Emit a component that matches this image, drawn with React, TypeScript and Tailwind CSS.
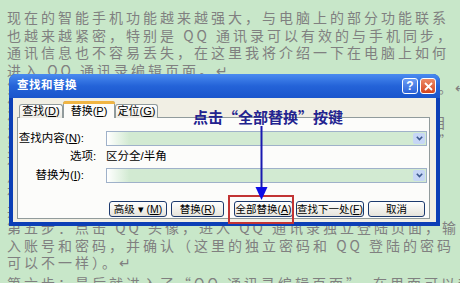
import React from 'react';

const cjk = "font-['Noto_Sans_CJK_SC','Liberation_Sans',sans-serif]";
const ui = "font-['Liberation_Sans','Noto_Sans_CJK_SC',sans-serif]";

// document text behind the dialog; most middle lines are hidden by the window
const docLines: { text: string; cls?: string }[] = [
  { text: '现在的智能手机功能越来越强大，与电脑上的部分功能联系' },
  { text: '也越来越紧密，特别是 QQ 通讯录可以有效的与手机同步，' },
  { text: '通讯信息也不容易丢失，在这里我将介绍一下在电脑上如何' },
  { text: '进入 QQ 通讯录编辑页面。↵' },
  { text: '第一步：在电脑上打开软件并登陆自己的帐号，找到面板 。↵' },
  { text: '第二步：在主面板的下方找到应用管理器的图标并打开。' },
  { text: '第三步：在打开的窗口中找到通讯录一项，然后点击进入目' },
  { text: '第四步：如果没有找到，可以点击添加应用进行搜索“通 ”' },
  { text: '这样就可以在应用列表中看到通讯录的图标了。↵' },
  { text: '点击图标以后，会弹出一个新的页面。↵' },
  { text: '在这里我们可以看到所有的联系人信息。↵' },
  { text: '并且可以进行编辑和修改。↵' },
  { text: '第五步：点击 QQ 头像，进入 QQ 通讯录独立登陆页面，输' },
  { text: '入账号和密码，并确认（这里的独立密码和 QQ 登陆的密码' },
  { text: '可以不一样）。↵', cls: 'mb-[3px]' },
  { text: '第六步：最后就进入了“QQ 通讯录编辑页面”，在里面可以新' },
];

function Key({ k }: { k: string }) {
  return (
    <>
      (<span className="underline underline-offset-1">{k}</span>)
    </>
  );
}

function XpButton({ w, children }: { w: string; children: React.ReactNode }) {
  return (
    <div
      className={`${w} flex h-[16px] items-center justify-center whitespace-nowrap rounded-[3px] border border-[#1d3a6e] bg-linear-to-b from-white to-[#e6e4dc] text-[10.5px] leading-none text-black`}
    >
      {children}
    </div>
  );
}

function Combo() {
  return (
    <div className="flex h-[15px] flex-1 items-stretch border border-[#9fb1c9] bg-linear-to-r from-white from-0% to-[#d2ead2] to-[7%]">
      <div className="flex-1" />
      <div className="m-[1px] flex w-[12px] items-center justify-center rounded-[2px] bg-[#c6d6f6]">
        <svg width="7" height="5" viewBox="0 0 7 5">
          <path d="M0.8 0.8 L3.5 3.6 L6.2 0.8" fill="none" stroke="#3d5a8e" strokeWidth="1.6" />
        </svg>
      </div>
    </div>
  );
}

function Dialog() {
  return (
    <div className={`absolute left-[9px] top-[74px] flex h-[152px] w-[431px] flex-col rounded-t-[7px] bg-[#0c3fb6] ${ui}`}>
      {/* Title bar */}
      <div className="flex h-[24px] items-center justify-between rounded-t-[7px] bg-linear-to-b from-[#4a8bf0] via-[#2463d8] to-[#1a55cc] pl-[8px] pr-[4px]">
        <span className="whitespace-nowrap text-[11.5px] font-bold tracking-[0.5px] text-white">查找和替换</span>
        <div className="flex gap-[2px]">
          <div className="flex h-[16px] w-[16px] items-center justify-center rounded-[3px] border border-white bg-linear-to-b from-[#6c9cf4] to-[#2e63d8] text-[12px] font-bold leading-none text-white">
            ?
          </div>
          <div className="flex h-[16px] w-[16px] items-center justify-center rounded-[3px] border border-white bg-linear-to-b from-[#ec8a66] to-[#d4431c]">
            <svg width="9" height="9" viewBox="0 0 9 9">
              <path d="M1 1 L8 8 M8 1 L1 8" stroke="white" strokeWidth="1.8" />
            </svg>
          </div>
        </div>
      </div>

      {/* Body */}
      <div className="mx-[4px] mb-[4px] flex flex-1 flex-col bg-[#f1efe4] pl-[4px] pr-[6px] pt-[3px] pb-[3px] text-[11.5px] text-black">
        {/* Tabs */}
        <div className="relative z-10 -mb-[1px] flex h-[17px] items-end whitespace-nowrap pl-[2px] text-[11px] leading-none">
          <div className="flex h-[14px] w-[44px] items-center justify-center rounded-t-[3px] border border-b-0 border-[#919b9c] bg-linear-to-b from-white to-[#ecebe4]">
            查找<Key k="D" />
          </div>
          <div className="flex h-[17px] w-[52px] flex-col rounded-t-[3px] border border-b-0 border-[#919b9c] bg-[#fcfcfa]">
            <div className="-mx-[1px] -mt-[1px] h-[3px] rounded-t-[3px] bg-[#f0b543]" />
            <div className="flex flex-1 items-center justify-center">
              替换<Key k="P" />
            </div>
          </div>
          <div className="flex h-[14px] w-[43px] items-center justify-center rounded-t-[3px] border border-b-0 border-[#919b9c] bg-linear-to-b from-white to-[#ecebe4]">
            定位<Key k="G" />
          </div>
        </div>

        {/* Tab panel */}
        <div className="flex flex-1 flex-col whitespace-nowrap border border-[#919b9c] bg-[#fcfcfa]">
          <div className="mt-[12px] flex items-center pr-[2px]">
            <div className="flex w-[66px] justify-end">
              查找内容<Key k="N" />:
            </div>
            <div className="w-[22px]" />
            <Combo />
          </div>
          <div className="flex h-[19px] items-center">
            <div className="w-[52px]" />
            <div className="w-[36px]">选项:</div>
            <div>区分全/半角</div>
          </div>
          <div className="mt-[1px] flex items-center pr-[2px]">
            <div className="flex w-[66px] justify-end">
              替换为<Key k="I" />:
            </div>
            <div className="w-[22px]" />
            <Combo />
          </div>
          <div className="mb-[1px] mt-auto flex justify-end pr-[4px]">
            <XpButton w="w-[58px]">
              高级 ▾ <Key k="M" />
            </XpButton>
            <div className="w-[4px]" />
            <XpButton w="w-[53px]">
              替换<Key k="R" />
            </XpButton>
            <div className="w-[10px]" />
            <XpButton w="w-[59px]">
              全部替换<Key k="A" />
            </XpButton>
            <div className="w-[3px]" />
            <XpButton w="w-[68px]">
              查找下一处<Key k="F" />
            </XpButton>
            <div className="w-[4px]" />
            <XpButton w="w-[57px]">取消</XpButton>
          </div>
        </div>
      </div>

      {/* Red highlight around 全部替换 */}
      <div className="absolute left-[219px] top-[121px] h-[29px] w-[66px] border-2 border-[#c23434]" />
    </div>
  );
}

export default function App() {
  return (
    <div className="relative h-[283px] w-[460px] overflow-hidden bg-[#c8e7c9]">
      <div className={`pl-[7px] pt-[9px] text-[14px] leading-[17.5px] tracking-[3px] text-[#808080] ${cjk}`}>
        {docLines.map((line, i) => (
          <div key={i} className={`whitespace-nowrap ${line.cls ?? ''}`}>
            {line.text}
          </div>
        ))}
      </div>

      <Dialog />

      {/* Annotation */}
      <div className={`absolute left-[193px] top-[109px] whitespace-nowrap text-[15px] font-bold leading-none text-[#23238f] ${cjk}`}>
        点击“全部替换”按键
      </div>
      <svg className="absolute left-[254px] top-[124px]" width="16" height="78" viewBox="0 0 16 78">
        <line x1="7.5" y1="2" x2="7.5" y2="66" stroke="#1a1ab0" strokeWidth="2" />
        <path d="M1.5 63 L13.5 63 L7.5 76 Z" fill="#0d0de6" />
      </svg>
    </div>
  );
}
